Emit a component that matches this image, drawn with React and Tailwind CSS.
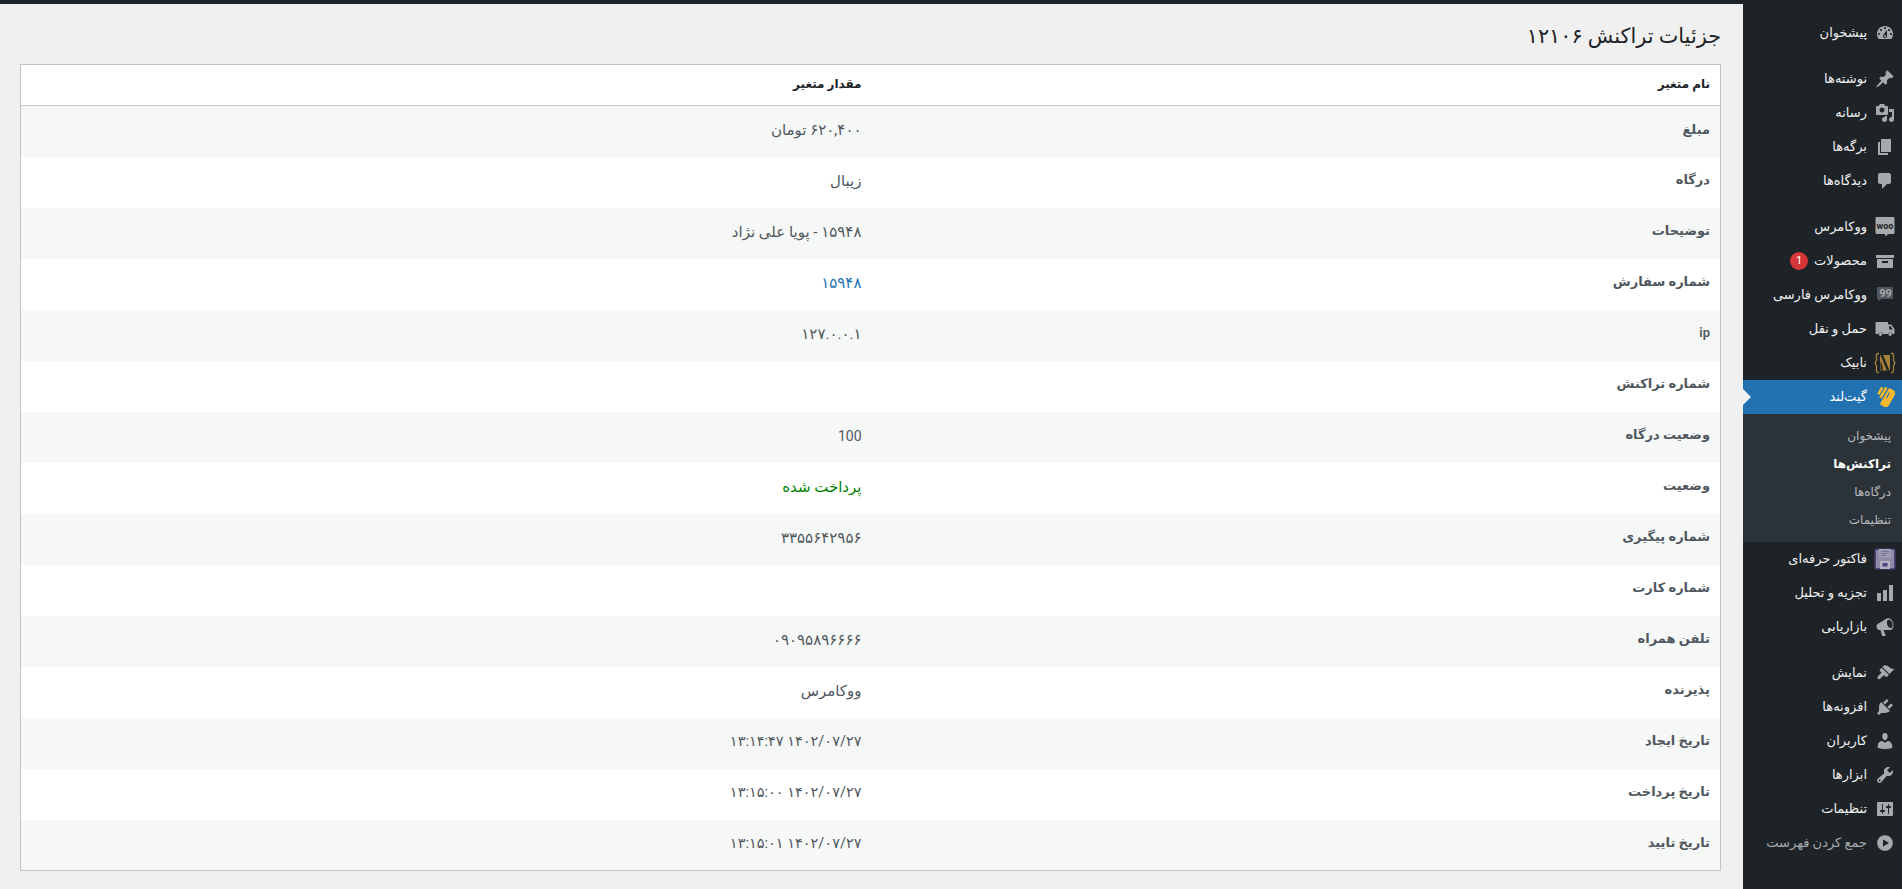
const iconPaths = {
    dashboard: "M3.76 16h12.48c1.1-1.37 1.76-3.11 1.76-5 0-4.42-3.58-8-8-8s-8 3.58-8 8c0 1.89.66 3.63 1.76 5zM10 4c.55 0 1 .45 1 1s-.45 1-1 1-1-.45-1-1 .45-1 1-1zM6 6c.55 0 1 .45 1 1s-.45 1-1 1-1-.45-1-1 .45-1 1-1zm8 0c.55 0 1 .45 1 1s-.45 1-1 1-1-.45-1-1 .45-1 1-1zm-5.37 5.55L12 7v6c0 1.1-.9 2-2 2s-2-.9-2-2c0-.57.24-1.08.63-1.45zM4 10c.55 0 1 .45 1 1s-.45 1-1 1-1-.45-1-1 .45-1 1-1zm12 0c.55 0 1 .45 1 1s-.45 1-1 1-1-.45-1-1 .45-1 1-1zm-5 3c0-.55-.45-1-1-1s-1 .45-1 1 .45 1 1 1 1-.45 1-1z",
    pin: "M10.44 3.02l1.82-1.82 6.36 6.35-1.83 1.82c-1.05-.68-2.48-.57-3.41.36l-.75.75c-.92.93-1.04 2.35-.35 3.41l-1.83 1.82-2.41-2.41-2.8 2.79c-.42.42-3.38 2.71-3.8 2.29s1.86-3.39 2.28-3.81l2.79-2.79L4.1 9.36l1.83-1.82c1.05.69 2.48.57 3.41-.36l.75-.75c.93-.92 1.04-2.35.35-3.41z",
    media: "M13 11V4c0-.55-.45-1-1-1h-1.67L9 1H5L3.67 3H2c-.55 0-1 .45-1 1v7c0 .55.45 1 1 1h10c.55 0 1-.45 1-1zM7 4.5c1.38 0 2.5 1.12 2.5 2.5S8.38 9.5 7 9.5 4.5 8.38 4.5 7 5.62 4.5 7 4.5zM14 6h5v10.5c0 1.38-1.12 2.5-2.5 2.5S14 17.88 14 16.5s1.12-2.5 2.5-2.5c.17 0 .34.02.5.05V9h-3V6zm-4 8.05V13h2v3.5c0 1.38-1.12 2.5-2.5 2.5S7 17.88 7 16.5 8.12 14 9.5 14c.17 0 .34.02.5.05z",
    page: "M6 15V2h10v13H6zm-1 1h8v2H3V5h2v11z",
    comment: "M5 2h9c1.1 0 2 .9 2 2v7c0 1.1-.9 2-2 2h-2l-5 5v-5H5c-1.1 0-2-.9-2-2V4c0-1.1.9-2 2-2z",
    archive: "M19 4v3H1V4h18zM2 8h16v9H2V8zm5 2v2h6v-2H7z",
    truck: "M1.5 3H12c.6 0 1 .4 1 1v1.500h3.200L19.500 10v4c0 .6-.4 1-1 1h-1.100a2.300 2.300 0 0 0-4.500 0H7.800a2.300 2.300 0 0 0-4.500 0H1.500c-.6 0-1-.4-1-1V4c0-.6.4-1 1-1zm12.700 4v3.500h3.600L15.500 7h-1.300zM5.500 13.500a1.700 1.700 0 1 1 0 3.400 1.700 1.700 0 0 1 0-3.400zm9.600 0a1.700 1.700 0 1 1 0 3.400 1.700 1.700 0 0 1 0-3.400z",
    chart: "M18 18V2h-4v16h4zm-6 0V7H8v11h4zm-6 0v-8H2v8h4z",
    megaphone: "M18.15 5.94c.46 1.62.38 3.22-.02 4.48-.42 1.28-1.26 2.18-2.3 2.48-.16.06-.26.06-.4.06-.06.02-.12.02-.18.02-.06.02-.14.02-.22.02H8.5l2.22 5.5c.02.14-.06.26-.14.34-.08.1-.24.16-.34.16H7.5c-.1 0-.26-.06-.34-.16-.08-.08-.16-.2-.14-.34L5.5 13H4.25c-.5.06-1.08-.18-1.54-.62s-.88-1.08-1.06-1.88c-.24-.8-.2-1.56-.02-2.2.18-.62.58-1.08 1.06-1.3l9.02-5.42c.06-.06.14-.08.24-.12.04-.04.1-.06.16-.08.16-.06.34-.1.5-.12 1.02-.3 2.2.12 3.2 1.02 1 .9 1.9 2.3 2.36 3.88zm-2 5.05c1.4-.4 1.9-2.6 1.14-4.84-.78-2.24-2.48-3.68-3.88-3.28-1.38.4-1.88 2.6-1.12 4.84.76 2.24 2.48 3.68 3.86 3.28z",
    brush: "M14.48 11.06L7.41 3.99l1.5-1.5c.5-.56 2.3-.47 3.51.32 1.21.8 1.43 1.28 2.91 2.1 1.18.64 2.45 1.26 4.45.85zm-.71.71L6.7 4.7 4.93 6.47c-.39.39-.39 1.02 0 1.41l1.06 1.06c.39.39.39 1.03 0 1.42-.6.6-3.4 3.1-3.5 3.64-.1.6.6 2.6 1.4 2.5.6-.1 3.9-3.1 4.5-3.7.4-.4 1-.4 1.4 0l1.07 1.06c.39.39 1.02.39 1.41 0z",
    plugin: "M13.11 4.36L9.87 7.6 8 5.73l3.24-3.24c.35-.34 1.05-.2 1.56.32.52.51.66 1.21.31 1.55zm-8 1.77l.91-1.12 9.01 9.01-1.19.84c-.71.71-2.63 1.16-3.82 1.16H6.14L4.9 17.26c-.59.59-1.54.59-2.12 0-.59-.58-.59-1.53 0-2.12l1.24-1.24v-3.88c0-1.13.4-3.19 1.09-3.89zm7.26 3.97l3.24-3.24c.34-.35 1.04-.21 1.55.31.52.51.66 1.21.31 1.55l-3.24 3.25z",
    user: "M10 9.25c-2.27 0-2.73-3.44-2.73-3.44C7 4.02 7.82 2 9.97 2c2.16 0 2.98 2.02 2.71 3.81 0 0-.41 3.44-2.68 3.44zm0 2.57L12.72 10c2.39 0 4.52 2.33 4.52 4.53v2.49s-3.65 1.13-7.24 1.13c-3.65 0-7.24-1.13-7.24-1.13v-2.49c0-2.25 1.94-4.48 4.47-4.48z",
    wrench: "M16.68 9.77c-1.34 1.34-3.3 1.67-4.95.99l-5.41 6.52c-.99.99-2.59.99-3.58 0s-.99-2.59 0-3.57l6.52-5.42c-.68-1.65-.35-3.61.99-4.95 1.28-1.28 3.12-1.62 4.72-1.06l-2.89 2.89 2.82 2.82 2.86-2.87c.53 1.58.18 3.39-1.08 4.65zM3.81 16.21c.4.39 1.04.39 1.43 0 .4-.4.4-1.04 0-1.43-.39-.4-1.03-.4-1.43 0-.39.39-.39 1.03 0 1.43z",
    settings: "M18 16V4c0-.55-.45-1-1-1H3c-.55 0-1 .45-1 1v12c0 .55.45 1 1 1h14c.55 0 1-.45 1-1zM8 11h1c.55 0 1 .45 1 1s-.45 1-1 1H8v1.5c0 .28-.22.5-.5.5s-.5-.22-.5-.5V13H6c-.55 0-1-.45-1-1s.45-1 1-1h1V5.5c0-.28.22-.5.5-.5s.5.22.5.5V11zm5-2h-1c-.55 0-1-.45-1-1s.45-1 1-1h1V5.5c0-.28.22-.5.5-.5s.5.22.5.5V7h1c.55 0 1 .45 1 1s-.45 1-1 1h-1v5.5c0 .28-.22.5-.5.5s-.5-.22-.5-.5V9z",
    collapse: "M10 2.16c4.33 0 7.84 3.51 7.84 7.84s-3.51 7.84-7.84 7.84S2.16 14.33 2.16 10 5.71 2.16 10 2.16zm-2 11.34l6-3.5-6-3.5v7z",
};

function MenuIcon({ name }) {
    if (name === "woo") {
        return (
            <svg viewBox="0 0 20 20" className="w-5 h-5">
                <path d="M2 0h16c1 0 1.500.5 1.500 1.500v14c0 1-.5 1.500-1.500 1.500h-5l-2.500 2.500-.7-2.500H2c-1 0-1.500-.5-1.500-1.500v-14C.5.5 1 0 2 0z" fill="#a7aaad" />
                <text x="10" y="11.500" textAnchor="middle" fontSize="9" fontWeight="700" fill="#1d2327" direction="ltr" fontFamily="Roboto">woo</text>
            </svg>
        );
    }
    if (name === "quote") {
        return (
            <svg viewBox="0 0 20 20" className="w-5 h-5">
                <path d="M3 2h14c.7 0 1 .3 1 1v10c0 .7-.3 1-1 1H6l-2.500 2.500V14H3c-.7 0-1-.3-1-1V3c0-.7.3-1 1-1z" fill="#50575e" />
                <text x="10.500" y="12" textAnchor="middle" fontSize="11" fontWeight="700" fill="#a7aaad" direction="ltr" fontFamily="Roboto">99</text>
            </svg>
        );
    }
    if (name === "nabik") {
        return (
            <svg viewBox="0 0 22 22" className="w-[22px] h-[22px]">
                <path d="M5 1.500H4C3 1.500 2.500 2.200 2.500 3.200v5.300L1 11l1.500 2.500v5.300c0 1 .5 1.700 1.500 1.700h1M17 1.500h1c1 0 1.500.7 1.500 1.700v5.300L21 11l-1.500 2.500v5.300c0 1-.5 1.700-1.500 1.700h-1" fill="none" stroke="#a5813a" strokeWidth="1.300" />
                <path d="M6 3h10v15.500H6z" fill="#a5813a" />
                <path d="M6.500 3H9l6.500 15.500H13z" fill="#1d2327" />
                <path d="M6.500 9l2 5v4.500h-2z" fill="#1d2327" />
            </svg>
        );
    }
    if (name === "gateland") {
        return (
            <svg viewBox="0 0 20 20" className="w-5 h-5">
                <g transform="rotate(30 10 10)" fill="#f5b82e">
                    <rect x="1.500" y="3" width="2.600" height="8" rx=".5" />
                    <rect x="5" y="1" width="2.800" height="12" rx=".5" />
                    <rect x="9" y="0" width="8.500" height="19" rx="1.500" />
                </g>
                <path d="M14.500 5.500 11.500 11" stroke="#2271b1" strokeWidth="1.200" />
            </svg>
        );
    }
    if (name === "invoice") {
        return (
            <svg viewBox="0 0 22 22" className="w-[22px] h-[22px]">
                <rect x="0.500" y="0.500" width="21" height="21" rx="2" fill="#4f4480" />
                <rect x="2" y="2" width="18" height="18" rx="1" fill="#8f8ba6" />
                <rect x="5" y="1" width="12" height="8.500" fill="#a09db3" />
                <path d="M7 3.500h8M7 5.500h8M7 7.500h5" stroke="#6f6a8c" strokeWidth=".8" />
                <rect x="6" y="13" width="10" height="8" fill="#b5b2c4" />
                <rect x="8.500" y="15" width="5" height="3.500" fill="#4f4480" />
            </svg>
        );
    }
    return (
        <svg viewBox="0 0 20 20" className="w-5 h-5 fill-[#a7aaad]" fillRule="evenodd">
            <path d={iconPaths[name]} />
        </svg>
    );
}

const menuGroups = [
    [{ icon: "dashboard", label: "پیشخوان" }],
    [
        { icon: "pin", label: "نوشته‌ها" },
        { icon: "media", label: "رسانه" },
        { icon: "page", label: "برگه‌ها" },
        { icon: "comment", label: "دیدگاه‌ها" },
    ],
    [
        { icon: "woo", label: "ووکامرس" },
        { icon: "archive", label: "محصولات", badge: "1" },
        { icon: "quote", label: "ووکامرس فارسی" },
        { icon: "truck", label: "حمل و نقل" },
        { icon: "nabik", label: "نابیک" },
        { icon: "gateland", label: "گیت‌لند", current: true },
        { icon: "invoice", label: "فاکتور حرفه‌ای" },
        { icon: "chart", label: "تجزیه و تحلیل" },
        { icon: "megaphone", label: "بازاریابی" },
    ],
    [
        { icon: "brush", label: "نمایش" },
        { icon: "plugin", label: "افزونه‌ها" },
        { icon: "user", label: "کاربران" },
        { icon: "wrench", label: "ابزارها" },
        { icon: "settings", label: "تنظیمات" },
    ],
];

const subMenu = [
    { label: "پیشخوان" },
    { label: "تراکنش‌ها", active: true },
    { label: "درگاه‌ها" },
    { label: "تنظیمات" },
];

const rows = [
    { name: "مبلغ", value: "۶۲۰,۴۰۰ تومان" },
    { name: "درگاه", value: "زیبال" },
    { name: "توضیحات", value: "۱۵۹۴۸ - پویا علی نژاد" },
    { name: "شماره سفارش", value: "۱۵۹۴۸", color: "text-[#2271b1]" },
    { name: "ip", value: "۱۲۷.۰.۰.۱" },
    { name: "شماره تراکنش", value: "" },
    { name: "وضعیت درگاه", value: "100", size: "text-[14px]" },
    { name: "وضعیت", value: "پرداخت شده", color: "text-[#008000]" },
    { name: "شماره پیگیری", value: "۳۳۵۵۶۴۲۹۵۶" },
    { name: "شماره کارت", value: "" },
    { name: "تلفن همراه", value: "۰۹۰۹۵۸۹۶۶۶۶" },
    { name: "پذیرنده", value: "ووکامرس" },
    { name: "تاریخ ایجاد", value: "۱۴۰۲/۰۷/۲۷ ۱۳:۱۴:۴۷", size: "text-[14.5px]" },
    { name: "تاریخ پرداخت", value: "۱۴۰۲/۰۷/۲۷ ۱۳:۱۵:۰۰", size: "text-[14.5px]" },
    { name: "تاریخ تایید", value: "۱۴۰۲/۰۷/۲۷ ۱۳:۱۵:۰۱", size: "text-[14.5px]" },
];

function MenuItem({ item }) {
    return (
        <>
            <div className={`relative flex items-center h-[34px] text-[13px] ${item.current ? "bg-[#2271b1] text-white" : "text-[#f0f0f1]"}`}>
                <span className="w-[35px] h-full flex items-center justify-center shrink-0">
                    <MenuIcon name={item.icon} />
                </span>
                <span className="whitespace-nowrap">{item.label}</span>
                {item.badge && (
                    <span className="mr-[6px] w-[18px] h-[18px] rounded-full bg-[#d63638] text-white text-[11px] flex items-center justify-center">
                        {item.badge}
                    </span>
                )}
                {item.current && (
                    <span className="absolute left-0 top-1/2 -translate-y-1/2 border-y-[8px] border-y-transparent border-l-[8px] border-l-[#f0f0f1]" />
                )}
            </div>
            {item.current && (
                <ul className="bg-[#2c3338] py-[8px] h-[128px]">
                    {subMenu.map(sub => (
                        <li
                            key={sub.label}
                            className={`h-[28px] flex items-center pr-[11px] text-[12px] ${sub.active ? "text-white font-semibold" : "text-[#f0f6fcb3]"}`}
                        >
                            {sub.label}
                        </li>
                    ))}
                </ul>
            )}
        </>
    );
}

export default function App() {
    return (
        <div dir="rtl" className="h-[889px] overflow-hidden flex flex-col bg-[#f0f0f1] font-[Roboto,'DejaVu_Sans',sans-serif]">
            <div className="h-1 bg-[#1d2327] shrink-0" />
            <div className="flex flex-1 min-h-0">
                <aside className="w-[159px] shrink-0 bg-[#1d2327] pt-3">
                    <nav className="flex flex-col gap-3">
                        {menuGroups.map((group, i) => (
                            <div key={i}>
                                {group.map(item => (
                                    <MenuItem key={item.label} item={item} />
                                ))}
                            </div>
                        ))}
                    </nav>
                    <div className="flex items-center h-[34px] text-[13px] text-[#a7aaad]">
                        <span className="w-[35px] h-full flex items-center justify-center shrink-0">
                            <MenuIcon name="collapse" />
                        </span>
                        <span>جمع کردن فهرست</span>
                    </div>
                </aside>

                <main className="flex-1 pr-[22px] pl-5">
                    <h1 className="h-[60px] pt-[15px] text-[20.8px] leading-[34px] text-[#1d2327]">
                        جزئیات تراکنش ۱۲۱۰۶
                    </h1>
                    <table className="w-full table-fixed border border-[#c3c4c7] bg-white text-right">
                        <thead>
                            <tr className="h-[41px] border-b border-[#c3c4c7]">
                                <th className="pr-[10px] pb-[2px] text-[12px] font-semibold text-[#1d2327]">نام متغیر</th>
                                <th className="pr-[9px] pb-[2px] text-[12px] font-semibold text-[#1d2327]">مقدار متغیر</th>
                            </tr>
                        </thead>
                        <tbody>
                            {rows.map((row, i) => (
                                <tr key={row.name} className={`h-[51px] ${i % 2 === 0 ? "bg-[#f6f7f7]" : "bg-white"}`}>
                                    <td className="pr-[10px] pb-[4px] text-[13px] font-semibold text-[#50575e]">{row.name}</td>
                                    <td className={`pr-[9px] pb-[2px] ${row.size || "text-[15px]"} ${row.color || "text-[#50575e]"}`}>
                                        {row.value}
                                    </td>
                                </tr>
                            ))}
                        </tbody>
                    </table>
                </main>
            </div>
        </div>
    );
}
